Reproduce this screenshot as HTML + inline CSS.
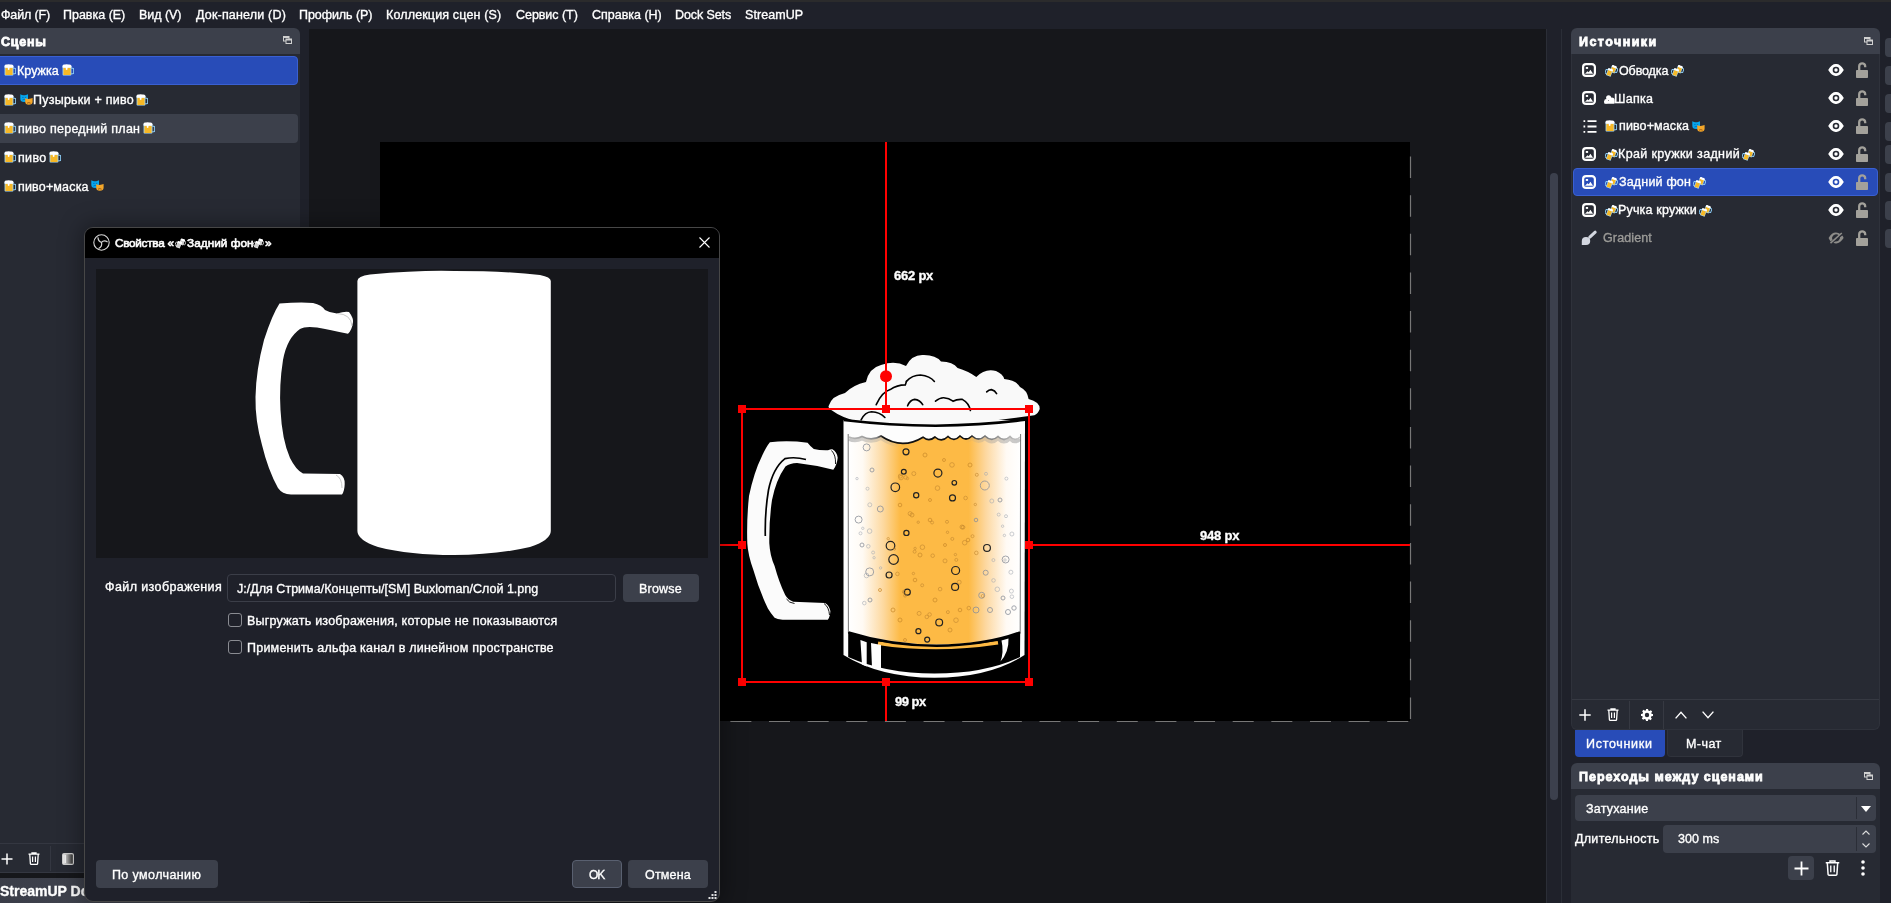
<!DOCTYPE html>
<html><head><meta charset="utf-8">
<style>
*{box-sizing:border-box;margin:0;padding:0}
html,body{width:1891px;height:903px;overflow:hidden;background:#1f212a;font-family:"Liberation Sans",sans-serif;color:#fefefe}
.a{position:absolute}
.t{position:absolute;white-space:pre;line-height:16px;height:16px;will-change:transform;-webkit-text-stroke:0.35px currentColor}
.m{font-size:12.4px}
.s{font-size:12.8px}
.h{font-size:14px;font-weight:bold}
.hdr{background:#3c404b}
.dockbg{background:#272a33}
svg.i{position:absolute;overflow:visible}
.em{display:inline-block;vertical-align:top}
</style></head><body>
<svg width="0" height="0" style="position:absolute">
<defs>
<symbol id="beer" viewBox="0 0 12 12">
 <path d="M9.2 4.3h1.6a0.9 0.9 0 0 1 0.9 0.9v3.6a0.9 0.9 0 0 1 -0.9 0.9h-1.6" fill="none" stroke="#8ccdf7" stroke-width="1.1"/>
 <rect x="0.6" y="1.4" width="8.8" height="10.2" rx="0.8" fill="#a9dcf8"/>
 <rect x="1.4" y="3.6" width="7.2" height="7.4" fill="#f7b826"/>
 <path d="M0.6 1.6 Q1 0.3 3 0.6 Q4.6 -0.2 6.2 0.6 Q8.6 0.2 9.4 1.8 V3.8 H5.5 V5.5 Q4.6 6.4 3.8 5.5 V3.8 H0.6Z" fill="#fff"/>
</symbol>
<symbol id="clink" viewBox="0 0 13 12">
 <g transform="rotate(20 8.5 4.5)">
  <path d="M10.6 2.5h1.2a0.7 0.7 0 0 1 .7.7v2.6a0.7 0.7 0 0 1 -.7.7h-1.2" fill="none" stroke="#8ccdf7" stroke-width="1"/>
  <rect x="5.8" y="1" width="5" height="6.8" fill="#a9dcf8"/>
  <rect x="6.3" y="2.5" width="4" height="4.8" fill="#f7b826"/>
  <path d="M5.8 1 Q7 0 8.3 0.5 Q9.8 0 10.8 1 V2.6 H5.8Z" fill="#fff"/>
 </g>
 <g transform="rotate(20 4.5 7.5)">
  <path d="M2.2 5.5h-1.2a0.7 0.7 0 0 0 -.7.7v2.6a0.7 0.7 0 0 0 .7.7h1.2" fill="none" stroke="#8ccdf7" stroke-width="1"/>
  <rect x="2" y="4" width="5" height="7.2" fill="#a9dcf8"/>
  <rect x="2.5" y="5.6" width="4" height="5" fill="#f7b826"/>
  <path d="M2 4 Q3.2 3 4.5 3.5 Q6 3 7 4 V5.6 H2Z" fill="#fff"/>
 </g>
</symbol>
<symbol id="masks" viewBox="0 0 13 11">
 <path d="M0.3 0.3 L2 1 Q4 1.6 6 1 L8 0.3 V4.8 Q8 8 4.2 8 Q0.3 8 0.3 4.8Z" fill="#06a7ef"/>
 <path d="M2.2 3.4h1.4M4.8 3.4h1.4M2.4 6q1.8-1.2 3.6 0" stroke="#0f5f99" stroke-width="0.7" fill="none"/>
 <path d="M5.2 4.2 L7 4.8 Q9 5.2 10.8 4.6 L12.6 4 V7.8 Q12.6 10.8 8.8 10.8 Q5.2 10.8 5.2 7.8Z" fill="#f4a72a"/>
 <path d="M7 9.2q1.8-1.2 3.6 0" stroke="#8a4a10" stroke-width="0.8" fill="none"/>
</symbol>
<symbol id="cloud" viewBox="0 0 11 9">
 <circle cx="4.6" cy="2.7" r="2.5" fill="#fff"/><circle cx="7.8" cy="5.2" r="2.8" fill="#fff"/><circle cx="2.4" cy="6.2" r="2.2" fill="#fff"/>
 <rect x="0.2" y="6" width="10.5" height="2.8" rx="0.8" fill="#fff"/>
</symbol>
<symbol id="img" viewBox="0 0 14 14">
 <rect x="1.1" y="1.1" width="11.8" height="11.8" rx="3" fill="none" stroke="#fff" stroke-width="2.2"/>
 <rect x="3.8" y="4" width="2.3" height="1.9" fill="#fff"/>
 <path d="M3 10.8 L5.5 8.2 L6.7 9.2 L8.4 6.8 L11.1 10.8Z" fill="#fff"/>
</symbol>
<symbol id="eye" viewBox="0 0 16 12">
 <path d="M0.2 6 Q4 -0.2 8 0.1 Q12 -0.2 15.8 6 Q12 12.2 8 11.9 Q4 12.2 0.2 6Z" fill="#fff"/>
 <circle cx="8" cy="6" r="3.3" fill="#272a33"/>
 <circle cx="8" cy="6" r="1.7" fill="#fff"/>
</symbol>
<symbol id="eyesel" viewBox="0 0 16 12">
 <path d="M0.2 6 Q4 -0.2 8 0.1 Q12 -0.2 15.8 6 Q12 12.2 8 11.9 Q4 12.2 0.2 6Z" fill="#fff"/>
 <circle cx="8" cy="6" r="3.3" fill="#284cb8"/>
 <circle cx="8" cy="6" r="1.7" fill="#fff"/>
</symbol>
<symbol id="lock" viewBox="0 0 12 16">
 <rect x="0" y="8" width="12" height="8" rx="0.8" fill="#a3a19b"/>
 <path d="M3.2 8.5 V4.3 A3 3 0 0 1 9.2 4.3 V5.2" fill="none" stroke="#a3a19b" stroke-width="2.3"/>
</symbol>
<symbol id="float" viewBox="0 0 9 8">
 <rect x="0.5" y="0.5" width="5.5" height="4.5" fill="none" stroke="#d0d0d0" stroke-width="1"/>
 <rect x="0.5" y="0.5" width="5.5" height="1.5" fill="#d0d0d0"/>
 <rect x="3" y="3" width="5.5" height="4.5" fill="#3c404b" stroke="#d0d0d0" stroke-width="1"/>
 <rect x="3" y="3" width="5.5" height="1.5" fill="#d0d0d0"/>
</symbol>
</defs>
</svg>
<div class="a" style="left:0;top:0;width:1891px;height:2px;background:#2b2b2c"></div>
<!-- menu -->
<div class="t" style="left:0.5px;top:6.5px;font-size:12.5px;letter-spacing:-0.13px">Файл (F)</div>
<div class="t" style="left:63.2px;top:6.5px;font-size:12.5px;letter-spacing:-0.01px">Правка (E)</div>
<div class="t" style="left:139.0px;top:6.5px;font-size:12.5px;letter-spacing:-0.05px">Вид (V)</div>
<div class="t" style="left:195.6px;top:6.5px;font-size:12.5px;letter-spacing:0.18px">Док-панели (D)</div>
<div class="t" style="left:299.0px;top:6.5px;font-size:12.5px;letter-spacing:-0.06px">Профиль (P)</div>
<div class="t" style="left:386.0px;top:6.5px;font-size:12.5px;letter-spacing:0.15px">Коллекция сцен (S)</div>
<div class="t" style="left:515.7px;top:6.5px;font-size:12.5px;letter-spacing:-0.05px">Сервис (T)</div>
<div class="t" style="left:591.8px;top:6.5px;font-size:12.5px;letter-spacing:-0.01px">Справка (H)</div>
<div class="t" style="left:675.0px;top:6.5px;font-size:12.5px;letter-spacing:-0.09px">Dock Sets</div>
<div class="t" style="left:745.4px;top:6.5px;font-size:12.5px;letter-spacing:0.07px">StreamUP</div>
<!-- preview bg -->
<div class="a" style="left:309px;top:29px;width:1237px;height:874px;background:#16171b"></div>
<!-- scrollbar -->
<div class="a" style="left:1546px;top:29px;width:16px;height:874px;background:#1f212a;border-left:1px solid #2b2e37;border-right:1px solid #2b2e37"></div>
<div class="a" style="left:1550px;top:173px;width:8px;height:627px;background:#3c404d;border-radius:4px"></div>
<!-- scenes dock -->
<div class="a hdr" style="left:-8px;top:28px;width:308px;height:26px;border-radius:0 6px 0 0"></div>
<div class="t" style="left:0.5px;top:33.5px;font-size:12.5px;letter-spacing:0.77px;font-weight:bold;-webkit-text-stroke:0.8px currentColor">Сцены</div>
<svg class="i" style="left:283px;top:36px" width="9" height="8"><use href="#float"/></svg>
<div class="a dockbg" style="left:-8px;top:54px;width:308px;height:789px"></div>
<div class="a" style="left:-8px;top:56px;width:306px;height:29px;background:#284cb8;border:1px solid #3a60d2;border-radius:4px"></div>
<div class="a" style="left:-8px;top:114px;width:306px;height:29px;background:#3c404b;border-radius:4px"></div>
<svg class="i" style="left:4px;top:64px" width="12" height="12"><use href="#beer"/></svg>
<div class="t" style="left:17.3px;top:62.9px;font-size:12.5px;letter-spacing:0.02px">Кружка</div>
<svg class="i" style="left:62px;top:64px" width="12" height="12"><use href="#beer"/></svg>

<svg class="i" style="left:4px;top:94px" width="12" height="12"><use href="#beer"/></svg>
<svg class="i" style="left:19.5px;top:93.5px" width="13" height="11"><use href="#masks"/></svg>
<div class="t" style="left:33.0px;top:91.7px;font-size:12.5px;letter-spacing:0.24px">Пузырьки + пиво</div>
<svg class="i" style="left:136px;top:94px" width="12" height="12"><use href="#beer"/></svg>

<svg class="i" style="left:4px;top:122px" width="12" height="12"><use href="#beer"/></svg>
<div class="t" style="left:18.3px;top:120.7px;font-size:12.5px;letter-spacing:0.26px">пиво передний план</div>
<svg class="i" style="left:143px;top:122px" width="12" height="12"><use href="#beer"/></svg>

<svg class="i" style="left:4px;top:151px" width="12" height="12"><use href="#beer"/></svg>
<div class="t" style="left:18.3px;top:149.7px;font-size:12.5px;letter-spacing:0.32px">пиво</div>
<svg class="i" style="left:49px;top:151px" width="12" height="12"><use href="#beer"/></svg>

<svg class="i" style="left:4px;top:180px" width="12" height="12"><use href="#beer"/></svg>
<div class="t" style="left:18.3px;top:178.7px;font-size:12.5px;letter-spacing:0.17px">пиво+маска</div>
<svg class="i" style="left:90.5px;top:180px" width="13" height="11"><use href="#masks"/></svg>
<!-- scenes toolbar -->
<div class="a dockbg" style="left:-8px;top:843px;width:308px;height:30px;border-top:1px solid #343741;border-bottom:1px solid #343741"></div>
<div class="a" style="left:50px;top:846px;width:1px;height:25px;background:#343741"></div>
<svg class="i" style="left:1px;top:853px" width="12" height="12" viewBox="0 0 12 12"><path d="M6 0.5V11.5M0.5 6H11.5" stroke="#fff" stroke-width="1.5"/></svg>
<svg class="i" style="left:28px;top:852px" width="12" height="13" viewBox="0 0 12 13"><path d="M0.5 2.2H11.5M4 2V0.8H8V2M1.8 2.5L2.4 11.6Q2.5 12.3 3.2 12.3H8.8Q9.5 12.3 9.6 11.6L10.2 2.5" fill="none" stroke="#fff" stroke-width="1.3"/><path d="M4.6 4.5V10M7.4 4.5V10" stroke="#fff" stroke-width="1.2"/></svg>
<svg class="i" style="left:62px;top:853px" width="12" height="12" viewBox="0 0 12 12"><defs><linearGradient id="fg" x1="0" x2="1"><stop offset="0" stop-color="#fff"/><stop offset="1" stop-color="#222"/></linearGradient></defs><rect x="0.6" y="0.6" width="10.8" height="10.8" rx="1.5" fill="url(#fg)" stroke="#ccc" stroke-width="1.2"/><rect x="2.5" y="2" width="1.5" height="8" fill="#eee"/></svg>
<div class="a" style="left:-8px;top:873px;width:308px;height:5px;background:#16171b"></div>
<div class="a hdr" style="left:-8px;top:878px;width:308px;height:25px;background:linear-gradient(90deg,#3a3d48,#4a4d57)"></div>
<div class="t h" style="left:0px;top:883px">StreamUP Dock</div>
<!-- canvas -->
<div class="a" style="left:380px;top:142px;width:1030px;height:579px;background:#000"></div>
<svg class="a" style="left:0;top:0" width="1891" height="903" viewBox="0 0 1891 903">
 <defs>
  <linearGradient id="beerg" x1="849" x2="1020" y1="0" y2="0" gradientUnits="userSpaceOnUse">
   <stop offset="0" stop-color="#ffffff"/>
   <stop offset="0.08" stop-color="#fffaf3"/>
   <stop offset="0.2" stop-color="#fdd9a0"/>
   <stop offset="0.3" stop-color="#fdba45"/>
   <stop offset="0.7" stop-color="#fdba45"/>
   <stop offset="0.8" stop-color="#fdd8a0"/>
   <stop offset="0.92" stop-color="#fffaf4"/>
   <stop offset="1" stop-color="#ffffff"/>
  </linearGradient>
   <linearGradient id="scal" x1="849" x2="1020" y1="0" y2="0" gradientUnits="userSpaceOnUse">
   <stop offset="0" stop-color="#b8b8b8"/><stop offset="0.16" stop-color="#8a8a8a"/><stop offset="0.2" stop-color="#111"/>
   <stop offset="0.7" stop-color="#111"/><stop offset="0.76" stop-color="#6a6a6a"/><stop offset="1" stop-color="#c8c8c8"/>
  </linearGradient>
  <linearGradient id="shad" x1="849" x2="1020" y1="0" y2="0" gradientUnits="userSpaceOnUse">
   <stop offset="0" stop-color="#999" stop-opacity="0.55"/><stop offset="0.2" stop-color="#999" stop-opacity="0.3"/><stop offset="0.3" stop-color="#999" stop-opacity="0"/>
   <stop offset="0.68" stop-color="#999" stop-opacity="0"/><stop offset="0.8" stop-color="#999" stop-opacity="0.35"/><stop offset="1" stop-color="#999" stop-opacity="0.55"/>
  </linearGradient>
 </defs>
 <!-- dashed edges -->
 <line x1="1410.5" y1="156.5" x2="1410.5" y2="721" stroke="#777" stroke-width="1.2" stroke-dasharray="21.5 17.14"/>
 <line x1="382.6" y1="721.5" x2="1410" y2="721.5" stroke="#777" stroke-width="1.2" stroke-dasharray="21 17.64"/>
 <!-- handle -->
 <path d="M769.9 442.2 Q788 440 807.6 442.7 Q810 446 813.8 448.9 Q820 450.5 828 450.2 Q831 449 832.4 449.3 Q837 452 837.7 457.7 Q837 465 833.3 469.7 Q815 465 797 463 Q790 463 785.4 466.6 Q776 480 772 500 Q769 520 769.3 543.2 Q770 556 774.6 565.9 Q779 582 785.2 595.1 Q788 600 793.2 601.8 L825 603 Q829 605 830.4 611 Q830 617 827.8 619.7 L782.6 619.7 Q777 619 774.6 617.7 Q770 612 767.9 608.4 Q759 590 753.3 569.8 Q748 555 747.3 543.2 Q746.5 520 749 496 Q754 472 762 456 Q766 447 769.9 442.2Z" fill="#fbfbfb"/>
 <path d="M806 459.5 Q795 456.5 785 458.6 Q773 468 768.5 490 Q764.8 512 765.3 536" fill="none" stroke="#000" stroke-width="1.7"/>
 <path d="M786.5 599 Q789 603 794.5 603.5 M824 603.5 Q829 607 829.5 615 M831.5 450.5 Q836 455 835.5 464" fill="none" stroke="#000" stroke-width="0.9"/>
 <!-- glass body -->
 <path d="M843.5 420 L843.5 655 Q880 677.5 934.4 677.8 Q990 677.5 1024.5 655 L1025 420Z" fill="#fdfdfd"/>
 <!-- beer -->
 <path d="M849 437 L1020 436 L1020 632 Q985 644 936.5 644.5 Q890 644 849 632Z" fill="url(#beerg)"/>
 
 <path d="M849 424 L1020 424 L1020 437.0 Q1015.0 442.0 1010.0 436.5 Q1004.0 442.5 998.0 436.5 Q991.5 442.5 985.0 436.0 Q978.5 442.0 972.0 436.0 Q966.0 442.0 960.0 436.0 Q954.0 442.5 948.0 436.5 Q941.5 443.0 935.0 437.0 Q929.0 442.2 923.0 437.2 Q902.0 450.2 881.0 436.0 Q871.5 441.5 862.0 436.5 Q855.5 440.0 849.0 437.0 Z" fill="#fdfdfd"/>
 <path d="M849.0 437.0 Q855.5 440.0 862.0 436.5 Q871.5 441.5 881.0 436.0 Q902.0 450.2 923.0 437.2 Q929.0 442.2 935.0 437.0 Q941.5 443.0 948.0 436.5 Q954.0 442.5 960.0 436.0 Q966.0 442.0 972.0 436.0 Q978.5 442.0 985.0 436.0 Q991.5 442.5 998.0 436.5 Q1004.0 442.5 1010.0 436.5 Q1015.0 442.0 1020.0 437.0" transform="translate(0 2.2)" fill="none" stroke="url(#shad)" stroke-width="3.5"/><path d="M849.0 437.0 Q855.5 440.0 862.0 436.5 Q871.5 441.5 881.0 436.0 Q902.0 450.2 923.0 437.2 Q929.0 442.2 935.0 437.0 Q941.5 443.0 948.0 436.5 Q954.0 442.5 960.0 436.0 Q966.0 442.0 972.0 436.0 Q978.5 442.0 985.0 436.0 Q991.5 442.5 998.0 436.5 Q1004.0 442.5 1010.0 436.5 Q1015.0 442.0 1020.0 437.0" fill="none" stroke="url(#scal)" stroke-width="1.7"/>
 <path d="M848.2 434 L848.4 633 M1020.6 434 L1020.2 633" stroke="#666" stroke-width="0.9"/>
 <!-- glass base -->
 <path d="M848.2 632 Q890 645.5 936.5 645.8 Q985 645.5 1020.2 632 L1020 657 Q985 673.5 934.4 673.5 Q885 673.5 848.2 657Z" fill="#000"/>
 <path d="M878 643.2 Q936.5 652 998 642.8" fill="none" stroke="#fdb943" stroke-width="3.6"/>
 <path d="M848.5 632.5 Q890 645.5 936.5 645.8 Q985 645.5 1020 632.5" fill="none" stroke="#000" stroke-width="2.6"/>
 <path d="M860.4 640 L866.7 642.2 L866.7 666.5 L862 664.5Z M871 643 L881 645 L881 669.5 L872 667.5Z" fill="#fdfdfd"/>
 <path d="M1001.5 640.5 L1008.5 638.5 Q1009 652 1000.5 661.5 Q1004 652 1001.5 640.5Z" fill="#fdfdfd"/>
 <!-- bubbles -->
 <g fill="none" stroke="#222" stroke-width="1.2">
  <circle cx="937.9" cy="473.1" r="4"/><circle cx="895.3" cy="487.3" r="4.3"/><circle cx="916.2" cy="495.2" r="2.6"/>
  <circle cx="952.5" cy="497.9" r="3"/><circle cx="954.3" cy="482.8" r="2.3"/><circle cx="906" cy="451.8" r="3"/>
  <circle cx="903.8" cy="471.7" r="2.4"/><circle cx="906.4" cy="532.9" r="2.6"/><circle cx="890.5" cy="545.7" r="4.3"/>
  <circle cx="893.6" cy="559.5" r="4.8"/><circle cx="955.6" cy="570.5" r="4"/><circle cx="955.1" cy="586.9" r="3.5"/>
  <circle cx="987" cy="547.9" r="3.4"/><circle cx="939.2" cy="622.4" r="3.4"/><circle cx="907.3" cy="592.2" r="3"/>
  <circle cx="889.1" cy="575" r="3"/><circle cx="918.4" cy="631.2" r="2.5"/><circle cx="927.2" cy="639.6" r="2.5"/>
 </g>
 <g fill="none" stroke="#8a8f99" stroke-width="1" opacity="0.8">
  <circle cx="984.8" cy="485.5" r="4.5"/><circle cx="866.6" cy="447.4" r="3.5"/><circle cx="880.3" cy="509" r="3"/>
  <circle cx="858.6" cy="519.6" r="3.5"/><circle cx="869.7" cy="571.9" r="4"/><circle cx="1005.6" cy="559.5" r="3.5"/>
  <circle cx="985.7" cy="572.7" r="2.5"/><circle cx="981.7" cy="595.3" r="3"/><circle cx="976" cy="610" r="3"/>
  <circle cx="1000" cy="500" r="2"/><circle cx="872" cy="470" r="2"/><circle cx="990" cy="610" r="2.5"/>
  <circle cx="1003" cy="598" r="2"/><circle cx="870" cy="600" r="2"/><circle cx="862" cy="545" r="2"/>
  <circle cx="1008" cy="612" r="2.5"/><circle cx="1014" cy="608" r="2.2"/><circle cx="976" cy="520" r="1.8"/>
 </g>
 <g fill="none" stroke="#c98a2a" stroke-width="0.9" opacity="0.8">
  <circle cx="925" cy="455" r="2"/><circle cx="944" cy="460" r="1.5"/><circle cx="912" cy="515" r="2"/><circle cx="930" cy="520" r="1.8"/>
  <circle cx="962" cy="527" r="2"/><circle cx="920" cy="555" r="2"/><circle cx="945" cy="545" r="1.5"/><circle cx="935" cy="600" r="2"/>
  <circle cx="960" cy="610" r="1.8"/><circle cx="900" cy="620" r="2"/><circle cx="970" cy="465" r="2"/><circle cx="915" cy="580" r="1.8"/>
  <circle cx="930" cy="500" r="1.5"/><circle cx="968" cy="540" r="1.8"/><circle cx="900" cy="505" r="1.8"/><circle cx="893" cy="610" r="2"/>
  <circle cx="950" cy="630" r="2"/><circle cx="880" cy="590" r="1.5"/><circle cx="905" cy="640" r="1.5"/>
 </g>
  <g fill="none" stroke="#c08530" stroke-width="0.8" opacity="0.75"><circle cx="907.5" cy="478.5" r="1.2"/><circle cx="947.9" cy="612.1" r="1.5"/><circle cx="894.5" cy="549.0" r="1.2"/><circle cx="955.4" cy="554.6" r="1.2"/><circle cx="947.0" cy="521.8" r="1.5"/><circle cx="922.4" cy="547.2" r="2.3"/><circle cx="905.1" cy="595.6" r="1.5"/><circle cx="915.1" cy="548.4" r="1.2"/><circle cx="945.0" cy="560.9" r="2.0"/><circle cx="963.1" cy="527.3" r="1.8"/><circle cx="929.6" cy="614.5" r="1.8"/><circle cx="903.8" cy="591.8" r="1.5"/><circle cx="952.0" cy="464.9" r="2.3"/><circle cx="922.2" cy="585.3" r="1.5"/><circle cx="976.3" cy="552.9" r="1.8"/><circle cx="910.1" cy="513.6" r="2.0"/><circle cx="947.5" cy="532.3" r="1.2"/><circle cx="968.8" cy="608.1" r="1.8"/><circle cx="952.3" cy="538.9" r="1.5"/><circle cx="976.8" cy="474.8" r="1.5"/><circle cx="919.1" cy="613.4" r="2.0"/><circle cx="900.3" cy="476.1" r="2.0"/><circle cx="932.7" cy="555.7" r="1.8"/><circle cx="901.0" cy="477.6" r="2.3"/><circle cx="914.6" cy="551.7" r="1.5"/><circle cx="964.7" cy="542.7" r="2.3"/><circle cx="959.2" cy="582.2" r="2.0"/><circle cx="918.2" cy="522.2" r="1.2"/><circle cx="932.1" cy="522.5" r="1.5"/><circle cx="956.0" cy="620.2" r="2.3"/><circle cx="913.8" cy="473.6" r="2.0"/><circle cx="905.6" cy="477.4" r="1.8"/><circle cx="972.5" cy="536.2" r="1.5"/><circle cx="937.5" cy="488.1" r="2.3"/><circle cx="913.4" cy="573.5" r="1.2"/><circle cx="975.3" cy="504.5" r="1.2"/><circle cx="965.6" cy="498.0" r="1.8"/><circle cx="940.1" cy="589.1" r="1.8"/><circle cx="956.3" cy="559.9" r="1.5"/><circle cx="982.7" cy="596.0" r="1.5"/><circle cx="888.2" cy="538.7" r="1.2"/><circle cx="897.4" cy="573.9" r="1.8"/><circle cx="926.8" cy="616.9" r="1.8"/></g>
 <g fill="none" stroke="#a0a6b0" stroke-width="0.8" opacity="0.7"><circle cx="868.3" cy="546.3" r="1.8"/><circle cx="862.8" cy="528.3" r="1.2"/><circle cx="986.0" cy="473.8" r="1.5"/><circle cx="864.3" cy="603.1" r="1.8"/><circle cx="873.1" cy="552.5" r="1.5"/><circle cx="869.8" cy="504.8" r="2.0"/><circle cx="993.5" cy="580.4" r="1.8"/><circle cx="1002.6" cy="526.2" r="1.2"/><circle cx="1004.4" cy="535.4" r="1.2"/><circle cx="866.5" cy="575.5" r="2.3"/><circle cx="1011.9" cy="596.7" r="1.8"/><circle cx="860.5" cy="533.3" r="1.5"/><circle cx="869.6" cy="531.1" r="2.3"/><circle cx="991.8" cy="501.0" r="2.0"/><circle cx="1010.9" cy="572.2" r="2.0"/><circle cx="1006.4" cy="478.6" r="1.5"/><circle cx="880.6" cy="567.9" r="1.2"/><circle cx="997.3" cy="589.3" r="2.3"/><circle cx="867.5" cy="488.7" r="1.5"/><circle cx="874.1" cy="557.7" r="1.2"/><circle cx="857.0" cy="478.6" r="1.2"/><circle cx="1005.0" cy="560.0" r="1.2"/><circle cx="993.4" cy="560.1" r="1.5"/><circle cx="1011.9" cy="534.0" r="2.0"/><circle cx="998.7" cy="514.6" r="1.5"/><circle cx="1011.4" cy="591.1" r="2.0"/><circle cx="1006.0" cy="516.2" r="1.5"/></g>
 <!-- foam -->
 <path d="M829.1 405 Q832 396 845 393 Q853 385 866 382 Q869 368 881 365 Q895 360 906 366 Q912 354 924 355 Q936 355 941 361.6 Q953 362 957.6 368 Q968 371 976.3 377 Q985 368 996 371 Q1003 374 1004.2 379 Q1016 380 1020 387 Q1027 390 1028.6 399 Q1040 402 1039.7 409 Q1038 414 1034.4 415.2 Q975 424 935.5 425.6 Q890 425 859.9 422.1 Q842 418 832 410.5 Q827 408 829.1 405Z" fill="#f9f9f9"/>
 <path d="M843.6 420 Q890 425.5 935.5 425.8 Q985 425 1025.1 419.8" fill="none" stroke="#000" stroke-width="2.6"/>
 <g fill="none" stroke="#000" stroke-width="1.6" stroke-linecap="round">
  <path d="M876.2 404.7 Q882 392 890.2 389.6 Q897 385 905.3 384.9 L906.4 381.4"/>
  <path d="M906.4 381.4 Q912 375 920.4 375 Q930 376 934.4 381.4"/>
  <path d="M907.6 405.8 Q910 400 914.6 399.4 Q920 400 922.7 404.7"/>
  <path d="M935.5 401.2 Q940 397.5 943.7 397.7 Q949 398 953 401.2 Q957 399 962.3 399.4 Q969 403 970.4 410.5"/>
  <path d="M986.7 391.9 Q989 389.5 991.4 389.6 Q995 390.5 996.6 393.6"/>
  <path d="M861.1 419.8 Q865 412 871.5 411.7 Q880 412 884.9 417.5"/>
 </g>
 <!-- guides -->
 <g fill="#ff0000">
  <rect x="885" y="142" width="2" height="267"/>
  <rect x="885" y="682" width="2" height="39"/>
  <rect x="380" y="544" width="362" height="2"/>
  <rect x="1029" y="544" width="381" height="2"/>
  <rect x="741" y="408" width="289" height="2"/>
  <rect x="741" y="681" width="289" height="2"/>
  <rect x="741" y="408" width="2" height="275"/>
  <rect x="1028" y="408" width="2" height="275"/>
  <circle cx="886" cy="376.3" r="6"/>
  <rect x="738" y="405" width="8" height="8"/><rect x="882" y="405" width="8" height="8"/><rect x="1025" y="405" width="8" height="8"/>
  <rect x="738" y="541" width="8" height="8"/><rect x="1025" y="541" width="8" height="8"/>
  <rect x="738" y="678" width="8" height="8"/><rect x="882" y="678" width="8" height="8"/><rect x="1025" y="678" width="8" height="8"/>
 </g>
</svg>
<div class="t" style="left:893.9px;top:268.2px;font-size:13px;letter-spacing:-0.23px;font-weight:bold">662 px</div>
<div class="t" style="left:1199.5px;top:527.9px;font-size:13px;letter-spacing:-0.19px;font-weight:bold">948 px</div>
<div class="t" style="left:894.9px;top:693.5px;font-size:13px;letter-spacing:-0.53px;font-weight:bold">99 px</div>
<!-- sources dock -->
<div class="a hdr" style="left:1571px;top:28px;width:309px;height:26px;border-radius:6px 6px 0 0"></div>
<div class="t" style="left:1579.1px;top:33.6px;font-size:12.5px;letter-spacing:1.45px;font-weight:bold;-webkit-text-stroke:0.8px currentColor">Источники</div>
<svg class="i" style="left:1864px;top:37px" width="9" height="8"><use href="#float"/></svg>
<div class="a dockbg" style="left:1571px;top:54px;width:309px;height:676px;border:1px solid #2f323b;border-top:none;border-radius:0 0 6px 6px"></div>
<div class="a" style="left:1572px;top:699px;width:307px;height:1px;background:#363942"></div>
<div class="a" style="left:1629px;top:701px;width:1px;height:28px;background:#363942"></div>
<div class="a" style="left:1663px;top:701px;width:1px;height:28px;background:#363942"></div>
<div class="a" style="left:1573px;top:168px;width:305px;height:28px;background:#284cb8;border:1px solid #3a60d2;border-radius:4px"></div>
<!-- rows -->
<svg class="i" style="left:1582px;top:63px" width="14" height="14"><use href="#img"/></svg>
<svg class="i" style="left:1605px;top:65px" width="13" height="12"><use href="#clink"/></svg>
<div class="t" style="left:1619.0px;top:62.6px;font-size:12.5px;letter-spacing:-0.12px">Обводка</div>
<svg class="i" style="left:1671px;top:65px" width="13" height="12"><use href="#clink"/></svg>

<svg class="i" style="left:1582px;top:91px" width="14" height="14"><use href="#img"/></svg>
<svg class="i" style="left:1604px;top:94.5px" width="11" height="9"><use href="#cloud"/></svg>
<div class="t" style="left:1614.4px;top:90.5px;font-size:12.5px;letter-spacing:0.27px">Шапка</div>

<svg class="i" style="left:1583px;top:120px" width="14" height="13" viewBox="0 0 14 13"><path d="M0.5 1.2H2.2M4.5 1.2H13.5M0.5 6.5H2.2M4.5 6.5H13.5M0.5 11.8H2.2M4.5 11.8H13.5" stroke="#fff" stroke-width="1.8"/></svg>
<svg class="i" style="left:1605px;top:120px" width="12" height="12"><use href="#beer"/></svg>
<div class="t" style="left:1619.4px;top:118.4px;font-size:12.5px;letter-spacing:0.11px">пиво+маска</div>
<svg class="i" style="left:1692px;top:120.5px" width="13" height="11"><use href="#masks"/></svg>

<svg class="i" style="left:1582px;top:147px" width="14" height="14"><use href="#img"/></svg>
<svg class="i" style="left:1605px;top:149px" width="13" height="12"><use href="#clink"/></svg>
<div class="t" style="left:1618.0px;top:146.3px;font-size:12.5px;letter-spacing:0.37px">Край кружки задний</div>
<svg class="i" style="left:1742px;top:149px" width="13" height="12"><use href="#clink"/></svg>

<svg class="i" style="left:1582px;top:175px" width="14" height="14"><use href="#img"/></svg>
<svg class="i" style="left:1605px;top:177px" width="13" height="12"><use href="#clink"/></svg>
<div class="t" style="left:1618.9px;top:174.2px;font-size:12.5px;letter-spacing:0.18px">Задний фон</div>
<svg class="i" style="left:1693px;top:177px" width="13" height="12"><use href="#clink"/></svg>

<svg class="i" style="left:1582px;top:203px" width="14" height="14"><use href="#img"/></svg>
<svg class="i" style="left:1605px;top:205px" width="13" height="12"><use href="#clink"/></svg>
<div class="t" style="left:1618.0px;top:202.1px;font-size:12.5px;letter-spacing:0.17px">Ручка кружки</div>
<svg class="i" style="left:1699px;top:205px" width="13" height="12"><use href="#clink"/></svg>

<svg class="i" style="left:1581px;top:230px" width="16" height="16" viewBox="0 0 16 16"><path d="M8.8 7.2 L14.2 2.2" stroke="#d3d7e0" stroke-width="3" stroke-linecap="round"/><path d="M0.8 15.1 V10.9 A4.2 4.1 0 1 1 5 15.1Z" fill="#d3d7e0"/></svg>
<div class="t" style="left:1603.0px;top:230.0px;font-size:12.5px;letter-spacing:0.12px;color:#9c9b98">Gradient</div>

<svg class="i" style="left:1828px;top:64px" width="16" height="12"><use href="#eye"/></svg>
<svg class="i" style="left:1828px;top:92px" width="16" height="12"><use href="#eye"/></svg>
<svg class="i" style="left:1828px;top:120px" width="16" height="12"><use href="#eye"/></svg>
<svg class="i" style="left:1828px;top:148px" width="16" height="12"><use href="#eye"/></svg>
<svg class="i" style="left:1828px;top:176px" width="16" height="12"><use href="#eyesel"/></svg>
<svg class="i" style="left:1828px;top:204px" width="16" height="12"><use href="#eye"/></svg>
<svg class="i" style="left:1828px;top:232px" width="16" height="12" viewBox="0 0 16 12"><path d="M0.6 6 Q4 0.4 8 0.6 Q10.5 0.6 12.6 2.2 L10.8 3.6 Q9.8 2.3 8 2.3 Q5.5 2.4 4.2 5 Q3.8 6.5 4.6 7.8 L2.6 9.4 Q1.4 8 0.6 6Z M14.2 3.6 Q15.2 4.6 15.6 6 Q12 11.6 8 11.4 Q6.6 11.4 5.4 10.8 L7 9.5 Q10.5 10 11.8 6.8 Q12 5.8 11.8 5.4Z" fill="#8d8c89"/><path d="M2.5 11.2 L13.8 1" stroke="#8d8c89" stroke-width="1.6"/></svg>
<svg class="i" style="left:1856px;top:62px" width="12" height="16"><use href="#lock"/></svg>
<svg class="i" style="left:1856px;top:90px" width="12" height="16"><use href="#lock"/></svg>
<svg class="i" style="left:1856px;top:118px" width="12" height="16"><use href="#lock"/></svg>
<svg class="i" style="left:1856px;top:146px" width="12" height="16"><use href="#lock"/></svg>
<svg class="i" style="left:1856px;top:174px" width="12" height="16"><use href="#lock"/></svg>
<svg class="i" style="left:1856px;top:202px" width="12" height="16"><use href="#lock"/></svg>
<svg class="i" style="left:1856px;top:230px" width="12" height="16"><use href="#lock"/></svg>
<!-- sources toolbar icons -->
<svg class="i" style="left:1579px;top:709px" width="12" height="12" viewBox="0 0 12 12"><path d="M6 0.3V11.7M0.3 6H11.7" stroke="#fff" stroke-width="1.5"/></svg>
<svg class="i" style="left:1607px;top:708px" width="12" height="13" viewBox="0 0 12 13"><path d="M0.5 2.2H11.5M4 2V0.8H8V2M1.8 2.5L2.4 11.6Q2.5 12.3 3.2 12.3H8.8Q9.5 12.3 9.6 11.6L10.2 2.5" fill="none" stroke="#fff" stroke-width="1.3"/><path d="M4.6 4.5V10M7.4 4.5V10" stroke="#fff" stroke-width="1.2"/></svg>
<svg class="i" style="left:1640.5px;top:709px" width="12" height="12" viewBox="0 0 24 24"><path fill="#fff" fill-rule="evenodd" d="M10 0h4l.6 3.2a9 9 0 0 1 2.3 1l2.7-1.9 2.8 2.8-1.9 2.7a9 9 0 0 1 1 2.3L24 10v4l-3.2.6a9 9 0 0 1-1 2.3l1.9 2.7-2.8 2.8-2.7-1.9a9 9 0 0 1-2.3 1L14 24h-4l-.6-3.2a9 9 0 0 1-2.3-1l-2.7 1.9-2.8-2.8 1.9-2.7a9 9 0 0 1-1-2.3L0 14v-4l3.2-.6a9 9 0 0 1 1-2.3L2.3 4.4l2.8-2.8 2.7 1.9a9 9 0 0 1 2.3-1z M12 7.6a4.4 4.4 0 1 0 0 8.8a4.4 4.4 0 1 0 0-8.8z"/></svg>
<svg class="i" style="left:1674.5px;top:710.5px" width="12" height="8" viewBox="0 0 12 8"><path d="M0.6 7.4L6 1.4L11.4 7.4" fill="none" stroke="#fff" stroke-width="1.4"/></svg>
<svg class="i" style="left:1701.5px;top:710.5px" width="12" height="8" viewBox="0 0 12 8"><path d="M0.6 0.6L6 6.6L11.4 0.6" fill="none" stroke="#fff" stroke-width="1.4"/></svg>
<!-- tabs -->
<div class="a" style="left:1575px;top:730px;width:90px;height:27px;background:#284cb8;border-radius:0 0 4px 4px"></div>
<div class="t" style="left:1586.0px;top:735.6px;font-size:12.5px;letter-spacing:0.70px">Источники</div>
<div class="a" style="left:1667px;top:730px;width:76px;height:27px;background:#272a33;border:1px solid #30333c;border-top:none;border-radius:0 0 4px 4px"></div>
<div class="t" style="left:1686.4px;top:735.6px;font-size:12.5px;letter-spacing:0.46px">М-чат</div>
<!-- transitions dock -->
<div class="a hdr" style="left:1571px;top:763px;width:309px;height:26px;border-radius:6px 6px 0 0"></div>
<div class="t" style="left:1579.0px;top:768.9px;font-size:12.5px;letter-spacing:0.99px;font-weight:bold;-webkit-text-stroke:0.8px currentColor">Переходы между сценами</div>
<svg class="i" style="left:1864px;top:772px" width="9" height="8"><use href="#float"/></svg>
<div class="a dockbg" style="left:1571px;top:789px;width:309px;height:114px"></div>
<div class="a" style="left:1575px;top:795px;width:301px;height:26px;background:#3c404b;border-radius:4px"></div>
<div class="a" style="left:1856px;top:797px;width:1px;height:22px;background:#2b2e37"></div>
<svg class="i" style="left:1861px;top:805.5px" width="10" height="6" viewBox="0 0 10 6"><path d="M0 0H10L5 6Z" fill="#fff"/></svg>
<div class="t" style="left:1585.7px;top:800.5px;font-size:12.5px;letter-spacing:0.23px">Затухание</div>
<div class="t" style="left:1575.0px;top:831.4px;font-size:12.5px;letter-spacing:0.30px">Длительность</div>
<div class="a" style="left:1663px;top:825px;width:213px;height:28px;background:#3c404b;border-radius:4px"></div>
<div class="a" style="left:1856px;top:827px;width:1px;height:24px;background:#2b2e37"></div>
<svg class="i" style="left:1862px;top:829.5px" width="8" height="5" viewBox="0 0 8 5"><path d="M0.5 4.5L4 1L7.5 4.5" fill="none" stroke="#ddd" stroke-width="1.1"/></svg>
<svg class="i" style="left:1862px;top:843px" width="8" height="5" viewBox="0 0 8 5"><path d="M0.5 0.5L4 4L7.5 0.5" fill="none" stroke="#ddd" stroke-width="1.1"/></svg>
<div class="t" style="left:1677.9px;top:831.4px;font-size:12.5px;letter-spacing:0.05px">300 ms</div>
<div class="a" style="left:1788px;top:856px;width:26px;height:24px;background:#3c404b;border-radius:4px"></div>
<svg class="i" style="left:1793.5px;top:861px" width="15" height="15" viewBox="0 0 15 15"><path d="M7.5 0.5V14.5M0.5 7.5H14.5" stroke="#fff" stroke-width="1.8"/></svg>
<svg class="i" style="left:1825px;top:860px" width="15" height="16" viewBox="0 0 12 13"><path d="M0.5 2.2H11.5M4 2V0.8H8V2M1.8 2.5L2.4 11.6Q2.5 12.3 3.2 12.3H8.8Q9.5 12.3 9.6 11.6L10.2 2.5" fill="none" stroke="#fff" stroke-width="1.2"/><path d="M4.6 4.5V10M7.4 4.5V10" stroke="#fff" stroke-width="1.1"/></svg>
<svg class="i" style="left:1861px;top:860px" width="4" height="16" viewBox="0 0 4 16"><circle cx="2" cy="2" r="1.8" fill="#fff"/><circle cx="2" cy="8" r="1.8" fill="#fff"/><circle cx="2" cy="14" r="1.8" fill="#fff"/></svg>
<!-- right sliver buttons -->
<div class="a" style="left:1885px;top:38px;width:20px;height:19px;background:#3c404b;border-radius:4px"></div>
<div class="a" style="left:1885px;top:66px;width:20px;height:19px;background:#3c404b;border-radius:4px"></div>
<div class="a" style="left:1885px;top:94px;width:20px;height:19px;background:#3c404b;border-radius:4px"></div>
<div class="a" style="left:1885px;top:122px;width:20px;height:19px;background:#3c404b;border-radius:4px"></div>
<div class="a" style="left:1885px;top:145px;width:20px;height:19px;background:#3c404b;border-radius:4px"></div>
<div class="a" style="left:1885px;top:173px;width:20px;height:19px;background:#3c404b;border-radius:4px"></div>
<div class="a" style="left:1885px;top:201px;width:20px;height:19px;background:#3c404b;border-radius:4px"></div>
<div class="a" style="left:1885px;top:229px;width:20px;height:19px;background:#3c404b;border-radius:4px"></div>
<!-- dialog -->
<div class="a" style="left:85px;top:228px;width:635px;height:673px;border-radius:8px;box-shadow:0 0 22px 4px rgba(0,0,0,0.35)"></div>
<div class="a" style="left:84px;top:227px;width:636px;height:675px;background:#1f212a;border:1px solid #474747;border-radius:9px;overflow:hidden">
 <div class="a" style="left:0;top:0;width:634px;height:30px;background:#000"></div>
 <div class="a" style="left:11px;top:41px;width:612px;height:289px;background:#16171b"></div>
</div>
<svg class="i" style="left:92.5px;top:233.5px" width="17" height="17" viewBox="0 0 17 17"><circle cx="8.5" cy="8.5" r="7.7" fill="none" stroke="#d8d8d8" stroke-width="1.1"/><path d="M8.5 8.3 Q5.4 7.6 4.9 3.4 M8.5 8.3 Q11 5.8 14.6 8 M8.5 8.3 Q9.6 12.3 5.6 14.6" fill="none" stroke="#d8d8d8" stroke-width="1.2"/></svg>
<div class="t" style="left:114.9px;top:234.5px;font-size:11.8px;letter-spacing:-0.30px;-webkit-text-stroke:0.6px currentColor">Свойства «</div>
<svg class="i" style="left:174.5px;top:237.5px;filter:grayscale(1) brightness(1.1)" width="11" height="11"><use href="#clink"/></svg>
<div class="t" style="left:186.9px;top:234.5px;font-size:11.8px;letter-spacing:0.03px;-webkit-text-stroke:0.6px currentColor">Задний фон</div>
<svg class="i" style="left:253.2px;top:237.5px;filter:grayscale(1) brightness(1.1)" width="11" height="11"><use href="#clink"/></svg>
<div class="t" style="left:264.7px;top:234.5px;font-size:11.8px;letter-spacing:-3.00px;-webkit-text-stroke:0.6px currentColor">»</div>
<svg class="i" style="left:698.5px;top:236.5px" width="11" height="11" viewBox="0 0 11 11"><path d="M0.5 0.5L10.5 10.5M10.5 0.5L0.5 10.5" stroke="#fff" stroke-width="1.1"/></svg>
<!-- white mug silhouette -->
<svg class="a" style="left:0;top:0" width="1891" height="903" viewBox="0 0 1891 903">
 <path d="M357.4 281 Q357.4 276 370 274.5 Q420 270 454 271 Q505 271 540 275 Q550.8 277 550.8 281 L550.8 531 Q550.8 540 530 547 Q495 555 454 555 Q410 555 378 547 Q357.4 540 357.4 531Z" fill="#fff"/>
 <path d="M279.5 303.5 Q300 302 313 303 Q322 305 325 310 Q330 313 337 313.5 Q345 311 349 312 Q353.5 318 353 322 Q352 330 348 333.8 Q330 330 317 327.5 Q305 326 300 329 Q287 338 283 360 Q279 385 280.5 410 Q282 440 290 458 Q296 470 303 473.6 L340 474 Q345 477 344.7 484 Q344.5 491 342 494.5 L291 494.5 Q282 494 278 488 Q268 470 262 445 Q255 420 255.5 397 Q256 370 264 340 Q272 315 279.5 303.5Z" fill="#fff"/>
 <path d="M337 313.5 Q351 314 352 326 M336 475 Q342 478 342 488" fill="none" stroke="#bbb" stroke-width="0.8"/>
</svg>
<div class="t" style="left:104.9px;top:578.7px;font-size:12.5px;letter-spacing:0.40px">Файл изображения</div>
<div class="a" style="left:227px;top:574px;width:389px;height:28px;border:1px solid #3b3e48;border-radius:4px"></div>
<div class="t" style="left:236.5px;top:580.9px;font-size:12.5px;letter-spacing:0.02px">J:/Для Стрима/Концепты/[SM] Buxloman/Слой 1.png</div>
<div class="a" style="left:623px;top:574px;width:76px;height:28px;background:#3c404b;border-radius:4px"></div>
<div class="t" style="left:639.4px;top:580.9px;font-size:12.5px;letter-spacing:0.21px">Browse</div>
<div class="a" style="left:228px;top:613px;width:14px;height:14px;border:1px solid #8a8c92;border-radius:3px"></div>
<div class="t" style="left:247.0px;top:612.5px;font-size:12.5px;letter-spacing:0.23px">Выгружать изображения, которые не показываются</div>
<div class="a" style="left:228px;top:640px;width:14px;height:14px;border:1px solid #8a8c92;border-radius:3px"></div>
<div class="t" style="left:247.0px;top:639.5px;font-size:12.5px;letter-spacing:0.22px">Применить альфа канал в линейном пространстве</div>
<div class="a" style="left:96px;top:860px;width:122px;height:28px;background:#3c404b;border-radius:4px"></div>
<div class="t" style="left:112.4px;top:866.9px;font-size:12.5px;letter-spacing:0.39px">По умолчанию</div>
<div class="a" style="left:572px;top:860px;width:50px;height:28px;background:#3c404b;border:1px solid #596070;border-radius:4px"></div>
<div class="t" style="left:588.5px;top:867.3px;font-size:12px;letter-spacing:-1.1px">OK</div>
<div class="a" style="left:628px;top:860px;width:80px;height:28px;background:#3c404b;border-radius:4px"></div>
<div class="t" style="left:645.0px;top:866.9px;font-size:12.5px;letter-spacing:0.16px">Отмена</div>
<svg class="i" style="left:708px;top:891px" width="9" height="9" viewBox="0 0 9 9"><g fill="#e0e0e0"><rect x="6.5" y="0" width="2" height="2"/><rect x="3.5" y="3" width="2" height="2"/><rect x="6.5" y="3" width="2" height="2"/><rect x="0.5" y="6" width="2" height="2"/><rect x="3.5" y="6" width="2" height="2"/><rect x="6.5" y="6" width="2" height="2"/></g></svg>
</body></html>
